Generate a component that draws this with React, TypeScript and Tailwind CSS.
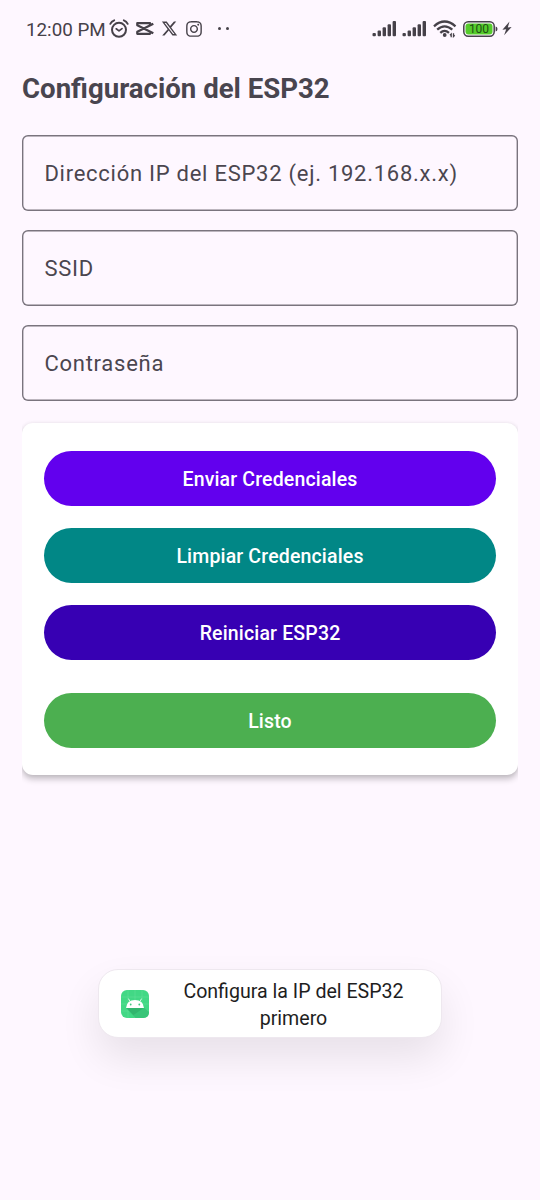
import type { ReactNode } from "react";
import { FaXTwitter, FaInstagram } from "react-icons/fa6";

function AlarmIcon() {
  return (
    <svg className="h-5 w-5" viewBox="0 0 20 20" fill="none" stroke="currentColor" strokeLinecap="round" strokeLinejoin="round">
      <circle cx="10" cy="10.8" r="7" strokeWidth="2" />
      <path d="M1.3 4.8Q2.5 2.3 5.2 1.3M18.7 4.8Q17.5 2.3 14.8 1.3" strokeWidth="1.9" />
      <path d="M7.2 9.8L10 11.9L13 9.6" strokeWidth="1.7" />
    </svg>
  );
}

function CapCutIcon() {
  return (
    <svg className="h-[15px] w-[18px]" viewBox="0 0 18 15" fill="none" stroke="currentColor" strokeWidth="2.3" strokeLinejoin="round">
      <path d="M14 4.2V2.2H1.3V4.2L17.3 12.2M14 10.8V12.8H1.3V10.8L17.3 2.8" />
    </svg>
  );
}

function SignalIcon() {
  return (
    <svg className="h-[17px] w-[25px]" viewBox="0 0 25 17" fill="currentColor">
      <rect x="0.5" y="13" width="3.4" height="3.3" rx="1" />
      <rect x="5.6" y="10.4" width="3.4" height="5.9" rx="1" />
      <rect x="10.6" y="7.3" width="3.4" height="9" rx="1" />
      <rect x="15.6" y="4.2" width="3.4" height="12.1" rx="1" />
      <rect x="20.6" y="1" width="3.4" height="15.3" rx="1" />
    </svg>
  );
}

function WifiIcon() {
  return (
    <svg className="h-[18px] w-[24px]" viewBox="0 0 24 18" fill="none" stroke="currentColor" strokeWidth="2.3">
      <path d="M1 6.3Q11.5 -3.2 22.5 6.3M4.2 9.7Q11.5 3 19.3 9.7M7.3 12.8Q11.5 8.9 16 12.8" />
      <circle cx="11.7" cy="15" r="1.9" fill="currentColor" stroke="none" />
      <path d="M18.2 17.3V14L17 15.2M20.5 13.2V16.5L21.7 15.3" strokeWidth="1.3" />
    </svg>
  );
}

function Battery() {
  return (
    <div className="relative h-4 w-[35px]">
      <svg className="h-4 w-[35px]" viewBox="0 0 35 16">
        <rect x="0.8" y="0.8" width="30.4" height="14.4" rx="4.4" fill="none" stroke="currentColor" strokeWidth="1.5" />
        <rect x="2.5" y="2.5" width="27" height="11" rx="3" fill="#55cb2b" />
        <path d="M32.6 5.5Q34.5 5.8 34.5 8Q34.5 10.2 32.6 10.5Z" fill="currentColor" />
      </svg>
      <span className="absolute inset-y-0 left-0 flex w-8 items-center justify-center pt-px text-[12px] leading-none text-[#1d4f14]">
        100
      </span>
    </div>
  );
}

function BoltIcon() {
  return (
    <svg className="h-[15px] w-[10px]" viewBox="0 0 10 15" fill="currentColor">
      <path d="M7.5 0.5L0.4 8.7L4.2 8.2L2.1 14.3L9.6 6L5.8 6.5Z" />
    </svg>
  );
}

function AppIcon() {
  return (
    <svg className="h-[30px] w-[30px]" viewBox="0 0 30 30">
      <rect x="1" y="1" width="28" height="28" rx="6" fill="#42d885" />
      <path d="M1 8H29M1 15H29M1 22H29M8 1V29M15 1V29M22 1V29" stroke="#65e09b" strokeWidth="0.5" />
      <path d="M6 18.8L15.5 29H23Q29 29 29 23L24 18.5Z" fill="#38c578" />
      <path d="M6 18.8L13.5 26L24 18.8Z" fill="#31b56d" />
      <path d="M10 12.3L8.4 9.6M20 12.3L21.6 9.6" fill="none" stroke="#fff" strokeWidth="0.8" />
      <path d="M6 18.9Q6.8 11 15 11Q23.2 11 24 18.9Z" fill="#fff" />
      <circle cx="10.7" cy="15.5" r="0.9" fill="#42c781" />
      <circle cx="19.3" cy="15.5" r="0.9" fill="#42c781" />
    </svg>
  );
}

function StatusBar() {
  return (
    <header className="flex h-[57px] items-center pl-[26px] text-[#464149]">
      <span className="w-[82px] pt-[3px] text-[18.8px] leading-6 whitespace-nowrap">12:00 PM</span>
      <div className="ml-px flex items-center">
        <AlarmIcon />
        <span className="ml-[7px]"><CapCutIcon /></span>
        <FaXTwitter className="ml-[7px] h-[17px] w-[17px]" />
        <FaInstagram className="ml-[7px] h-[18px] w-[18px]" />
        <span className="ml-[15px] flex gap-[5px]">
          <i className="h-[3px] w-[3px] rounded-full bg-current" />
          <i className="h-[3px] w-[3px] rounded-full bg-current" />
        </span>
      </div>
      <div className="mr-[28px] ml-auto flex items-center">
        <SignalIcon />
        <span className="ml-[5px]"><SignalIcon /></span>
        <span className="ml-[6px]"><WifiIcon /></span>
        <span className="ml-[6px]"><Battery /></span>
        <span className="ml-[4px]"><BoltIcon /></span>
      </div>
    </header>
  );
}

function Field({ label }: { label: string }) {
  return (
    <div className="flex h-[76.4px] items-center rounded-[6px] px-[22.4px] text-[22px] tracking-[0.74px] text-[#4b464f] shadow-[inset_0_0_0_1.4px_#7a747e]">
      {label}
    </div>
  );
}

function PillButton({ className, children }: { className: string; children: ReactNode }) {
  return (
    <button className={`h-[55px] w-full rounded-full pt-[3px] text-[19.5px] font-medium tracking-[0.16px] text-white ${className}`}>
      {children}
    </button>
  );
}

export default function App() {
  return (
    <div className="relative h-[1200px] w-[540px] overflow-hidden bg-[#fef7ff] font-[Roboto,sans-serif]">
      <StatusBar />
      <main className="px-[22px] pt-[16px]">
        <h1 className="h-[62px] text-[27.6px] leading-8 font-bold text-[#49454f]">Configuración del ESP32</h1>
        <div className="flex flex-col gap-[18.6px]">
          <Field label="Dirección IP del ESP32 (ej. 192.168.x.x)" />
          <Field label="SSID" />
          <Field label="Contraseña" />
        </div>
        <section className="mt-[21.6px] flex h-[352.5px] flex-col rounded-[11px] bg-white px-[22px] pt-[28px] shadow-[0_4px_6px_rgba(0,0,0,0.24),0_0_4px_rgba(0,0,0,0.06)] [clip-path:inset(-10px_0_-16px_0)]">
          <PillButton className="bg-[#6200ee]">Enviar Credenciales</PillButton>
          <PillButton className="mt-[22px] bg-[#018786]">Limpiar Credenciales</PillButton>
          <PillButton className="mt-[22px] bg-[#3700b3]">Reiniciar ESP32</PillButton>
          <PillButton className="mt-[33px] bg-[#4caf50]">Listo</PillButton>
        </section>
      </main>
      <div className="absolute top-[969px] left-[98px] flex h-[69px] w-[344px] items-center rounded-[20px] border border-[#eee8ef] bg-white pl-[21px] shadow-[0_20px_40px_rgba(0,0,0,0.09)]">
        <AppIcon />
        <p className="ml-[22px] w-[243px] pt-[3px] text-center text-[19.6px] leading-[27.5px] text-[#1e1e1e]">
          Configura la IP del ESP32 primero
        </p>
      </div>
    </div>
  );
}
